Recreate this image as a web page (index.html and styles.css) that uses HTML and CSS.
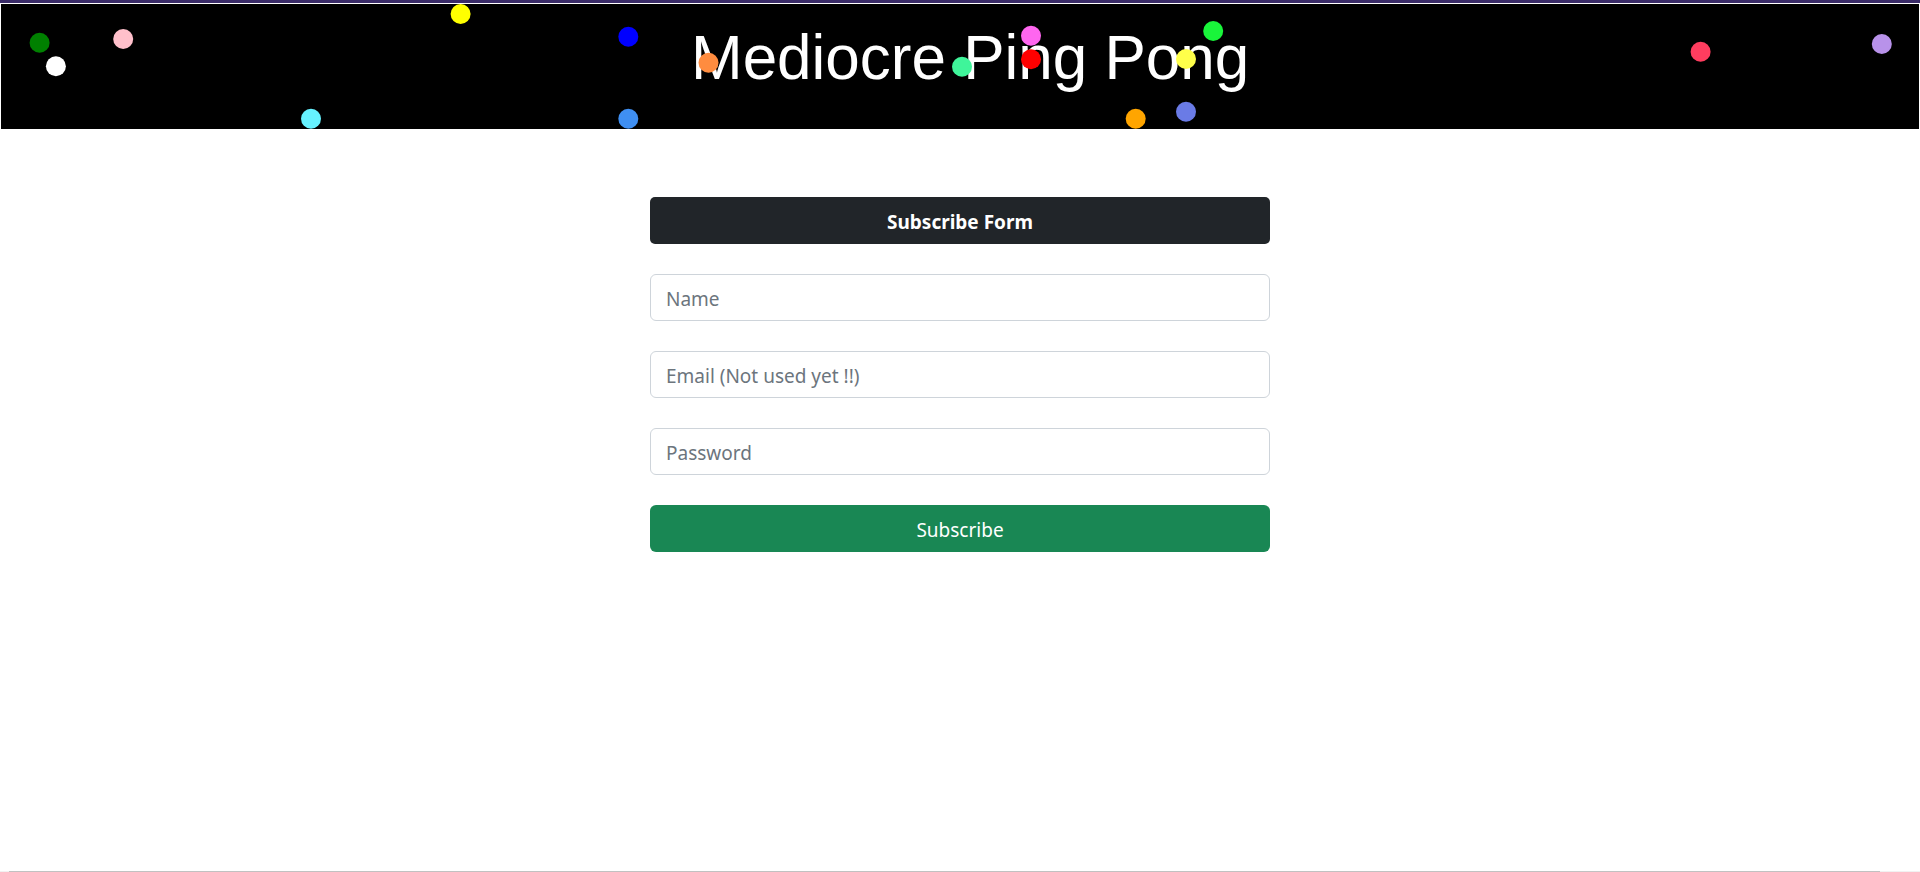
FILE: index.html
```html
<!DOCTYPE html>
<html lang="en">
<head>
<meta charset="utf-8">
<title>Mediocre Ping Pong</title>
<link rel="stylesheet" href="styles.css">
</head>
<body>
  <div class="topbar"></div>
  <header class="court-wrap">
    <svg class="court" viewBox="0 0 1918 125" width="1918" height="125">
      <rect x="0" y="0" width="1918" height="125" fill="#000"/>
      <text class="court-title" x="690" y="75" transform="translate(0 -2.25) scale(1 1.03)">Mediocre Ping Pong</text>
      <circle cx="38.6" cy="38.7" r="10" fill="#008000"/>
      <circle cx="122.2" cy="35" r="10" fill="#ffc0cb"/>
      <circle cx="54.9" cy="62.3" r="10" fill="#ffffff"/>
      <circle cx="459.6" cy="10" r="10" fill="#ffff00"/>
      <circle cx="627.3" cy="32.7" r="10" fill="#0000ff"/>
      <circle cx="310" cy="114.7" r="10" fill="#66f2ff"/>
      <circle cx="627.3" cy="114.7" r="10" fill="#3f8ff2"/>
      <circle cx="707.5" cy="58.7" r="10" fill="#ff8c3f"/>
      <circle cx="961" cy="62.7" r="10" fill="#3ff59a"/>
      <circle cx="1030" cy="31.7" r="10" fill="#ff66f0"/>
      <circle cx="1030" cy="55.3" r="10" fill="#ff0000"/>
      <circle cx="1212.2" cy="27" r="10" fill="#19f53a"/>
      <circle cx="1185" cy="55" r="10" fill="#ffff4a"/>
      <circle cx="1134.7" cy="114.7" r="10" fill="#ffa500"/>
      <circle cx="1185" cy="107.7" r="10" fill="#6a7be6"/>
      <circle cx="1699.6" cy="47.7" r="10" fill="#ff3d5f"/>
      <circle cx="1880.8" cy="40" r="10" fill="#b892ea"/>
    </svg>
  </header>

  <main class="main">
    <form class="subscribe">
      <div class="form-title">Subscribe Form</div>
      <input class="field" type="text" placeholder="Name">
      <input class="field" type="email" placeholder="Email (Not used yet !!)">
      <input class="field" type="password" placeholder="Password">
      <button class="btn-subscribe" type="button">Subscribe</button>
    </form>
  </main>

  <div class="hscroll"><div class="hscroll-thumb"></div></div>
</body>
</html>
```

FILE: styles.css
```css
* { box-sizing: border-box; }

html, body {
  margin: 0;
  padding: 0;
  height: 100%;
}

body {
  display: flex;
  flex-direction: column;
  min-height: 872px;
  background: #fff;
  font-family: "Noto Sans", "Open Sans", sans-serif;
  color: #212529;
  overflow: hidden;
}

.topbar {
  height: 3px;
  background: #3a2b68;
}

.court-wrap {
  padding: 1px 0 0 1px;
  background: #fff;
  line-height: 0;
}

.court {
  display: block;
  width: 1918px;
  height: 125px;
}

.court-title {
  font-family: "Liberation Sans", Arial, sans-serif;
  font-size: 62px;
  fill: #fff;
}

.main {
  flex: 1;
  display: flex;
  justify-content: center;
  padding-top: 68px;
}

.subscribe {
  width: 620px;
  display: flex;
  flex-direction: column;
  gap: 30px;
}

.form-title {
  height: 47px;
  padding-top: 2px;
  background: #212529;
  color: #fff;
  border-radius: 5px;
  font-weight: 700;
  font-size: 19px;
  display: flex;
  align-items: center;
  justify-content: center;
}

.field {
  height: 47px;
  width: 100%;
  border: 1px solid #ced4da;
  border-radius: 6px;
  padding: 2px 15px 0;
  font-family: inherit;
  font-size: 19px;
  color: #212529;
  background: #fff;
  outline: none;
}

.field::placeholder {
  color: #6c757d;
  opacity: 1;
}

.btn-subscribe {
  height: 47px;
  width: 100%;
  border: 0;
  border-radius: 6px;
  padding: 2px 0 0;
  background: #198754;
  color: #fff;
  font-family: inherit;
  font-size: 19px;
  cursor: pointer;
}

.hscroll {
  height: 1px;
  background: #f1f1f1;
  padding: 0 40px 0 9px;
}

.hscroll-thumb {
  height: 1px;
  background: #c1c1c1;
}
```
